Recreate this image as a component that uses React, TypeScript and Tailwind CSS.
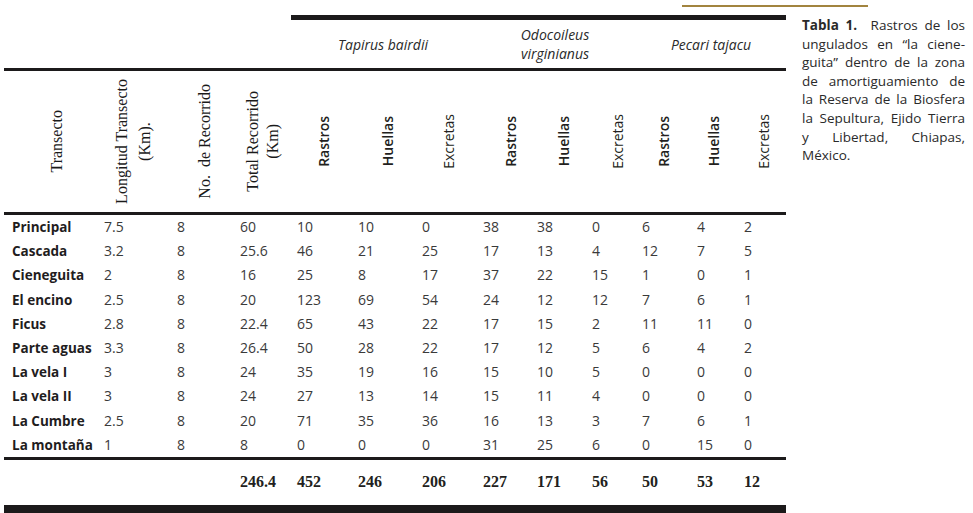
import React from "react";

const rows: string[][] = [
  ["Principal", "7.5", "8", "60", "10", "10", "0", "38", "38", "0", "6", "4", "2"],
  ["Cascada", "3.2", "8", "25.6", "46", "21", "25", "17", "13", "4", "12", "7", "5"],
  ["Cieneguita", "2", "8", "16", "25", "8", "17", "37", "22", "15", "1", "0", "1"],
  ["El encino", "2.5", "8", "20", "123", "69", "54", "24", "12", "12", "7", "6", "1"],
  ["Ficus", "2.8", "8", "22.4", "65", "43", "22", "17", "15", "2", "11", "11", "0"],
  ["Parte aguas", "3.3", "8", "26.4", "50", "28", "22", "17", "12", "5", "6", "4", "2"],
  ["La vela I", "3", "8", "24", "35", "19", "16", "15", "10", "5", "0", "0", "0"],
  ["La vela II", "3", "8", "24", "27", "13", "14", "15", "11", "4", "0", "0", "0"],
  ["La Cumbre", "2.5", "8", "20", "71", "35", "36", "16", "13", "3", "7", "6", "1"],
  ["La montaña", "1", "8", "8", "0", "0", "0", "31", "25", "6", "0", "15", "0"],
];

const totals = ["", "", "", "246.4", "452", "246", "206", "227", "171", "56", "50", "53", "12"];

const GRID =
  "grid grid-cols-[94px_73px_63px_57px_61px_64px_61px_54px_55px_50px_55px_47px_48px]";

const SANS = "font-['Open_Sans',sans-serif]";
const SERIF = "font-['Liberation_Serif',serif]";

const vt = "[writing-mode:vertical-rl] rotate-180 whitespace-nowrap text-center";

type H = { shift: string; content: React.ReactNode };

const headers: H[] = [
  { shift: "pl-[12px]", content: <span className={`${vt} ${SERIF} text-[16px] text-[#1a1a1a]`}>Transecto</span> },
  {
    shift: "pr-[3px]",
    content: (
      <span className={`${vt} ${SERIF} text-[16px] leading-[23px] text-[#1a1a1a]`}>
        Longitud Transecto
        <br />
        (Km).
      </span>
    ),
  },
  { shift: "pl-[5px]", content: <span className={`${vt} ${SERIF} text-[16px] text-[#1a1a1a]`}>No.&nbsp; de Recorrido</span> },
  {
    shift: "",
    content: (
      <span className={`${vt} ${SERIF} text-[16px] leading-[20px] text-[#1a1a1a]`}>
        Total Recorrido
        <br />
        (Km)
      </span>
    ),
  },
  { shift: "pl-[3px]", content: <span className={`${vt} ${SANS} text-[14px] font-semibold`}>Rastros</span> },
  { shift: "pl-[6px]", content: <span className={`${vt} ${SANS} text-[14px] font-semibold`}>Huellas</span> },
  { shift: "pl-[3px]", content: <span className={`${vt} ${SANS} text-[14px]`}>Excretas</span> },
  { shift: "pl-[12px]", content: <span className={`${vt} ${SANS} text-[14px] font-semibold`}>Rastros</span> },
  { shift: "pl-[9px]", content: <span className={`${vt} ${SANS} text-[14px] font-semibold`}>Huellas</span> },
  { shift: "pl-[12px]", content: <span className={`${vt} ${SANS} text-[14px]`}>Excretas</span> },
  { shift: "", content: <span className={`${vt} ${SANS} text-[14px] font-semibold`}>Rastros</span> },
  { shift: "pr-[3px]", content: <span className={`${vt} ${SANS} text-[14px] font-semibold`}>Huellas</span> },
  { shift: "pl-[2px]", content: <span className={`${vt} ${SANS} text-[14px]`}>Excretas</span> },
];

const capLines: React.ReactNode[] = [
  <>
    <b className="font-bold">Tabla 1.</b>&nbsp; Rastros de los
  </>,
  "ungulados en “la ciene-",
  "guita” dentro de la zona",
  "de amortiguamiento de",
  "la Reserva de la Biosfera",
  "la Sepultura, Ejido Tierra",
  "y Libertad, Chiapas,",
];

export default function App() {
  return (
    <div className="w-[973px] h-[513px] bg-white overflow-hidden text-[#231f20]">
      {/* top ornament rule */}
      <div className="h-[15px] pt-[5px]">
        <div className="ml-[682px] w-[186px] h-[2px] bg-[#a2843f]" />
      </div>

      <div className="flex">
        {/* Table */}
        <div className="ml-[4px] w-[782px]">
          {/* species row */}
          <div className="flex">
            <div className="w-[287px]" />
            <div className="w-[495px] border-t-[5px] border-[#1c1a1b] grid grid-cols-[186px_159px_150px] h-[53px]">
              <div className={`flex items-center justify-center ${SANS} italic text-[14px] text-[#2a2a2a] pr-[2px]`}>
                Tapirus bairdii
              </div>
              <div className={`flex items-center justify-center text-center ${SANS} italic text-[14px] leading-[19px] text-[#2a2a2a] pr-[3px]`}>
                Odocoileus
                <br />
                virginianus
              </div>
              <div className={`flex items-center justify-center ${SANS} italic text-[14px] text-[#2a2a2a]`}>
                Pecari tajacu
              </div>
            </div>
          </div>
          <div className="h-[3px] bg-[#1c1a1b]" />

          {/* column headers */}
          <div className={`${GRID} h-[141px]`}>
            {headers.map((h, i) => (
              <div key={i} className={`flex items-center justify-center ${h.shift}`}>
                {h.content}
              </div>
            ))}
          </div>
          <div className="h-[3px] bg-[#1c1a1b]" />

          {/* data rows */}
          {rows.map((r, ri) => (
            <div key={ri} className={`${GRID} h-[24.2px] items-center ${SANS} text-[14px] leading-[24px]`}>
              {r.map((c, ci) =>
                ci === 0 ? (
                  <div key={ci} className="pl-[8px] font-bold text-[13.5px] text-[#1f1d1e] whitespace-nowrap">
                    {c}
                  </div>
                ) : (
                  <div key={ci} className="pl-[6px] text-[#3a3a3a]">
                    {c}
                  </div>
                )
              )}
            </div>
          ))}
          <div className="h-[3px] bg-[#1c1a1b]" />

          {/* totals */}
          <div className={`${GRID} h-[45px] items-center ${SERIF} font-bold text-[16px]`}>
            {totals.map((c, ci) => (
              <div key={ci} className={ci === 0 ? "pl-[8px]" : "pl-[6px]"}>
                {c}
              </div>
            ))}
          </div>
          <div className="h-[8px] bg-[#1c1a1b]" />
        </div>

        {/* caption */}
        <div className={`ml-[16px] w-[163px] pt-[1px] ${SANS} text-[13.5px] leading-[18.6px] text-[#2a2a2a]`}>
          {capLines.map((l, i) => (
            <div key={i} className="text-justify [text-align-last:justify]">
              {l}
            </div>
          ))}
          <div>México.</div>
        </div>
      </div>
    </div>
  );
}
